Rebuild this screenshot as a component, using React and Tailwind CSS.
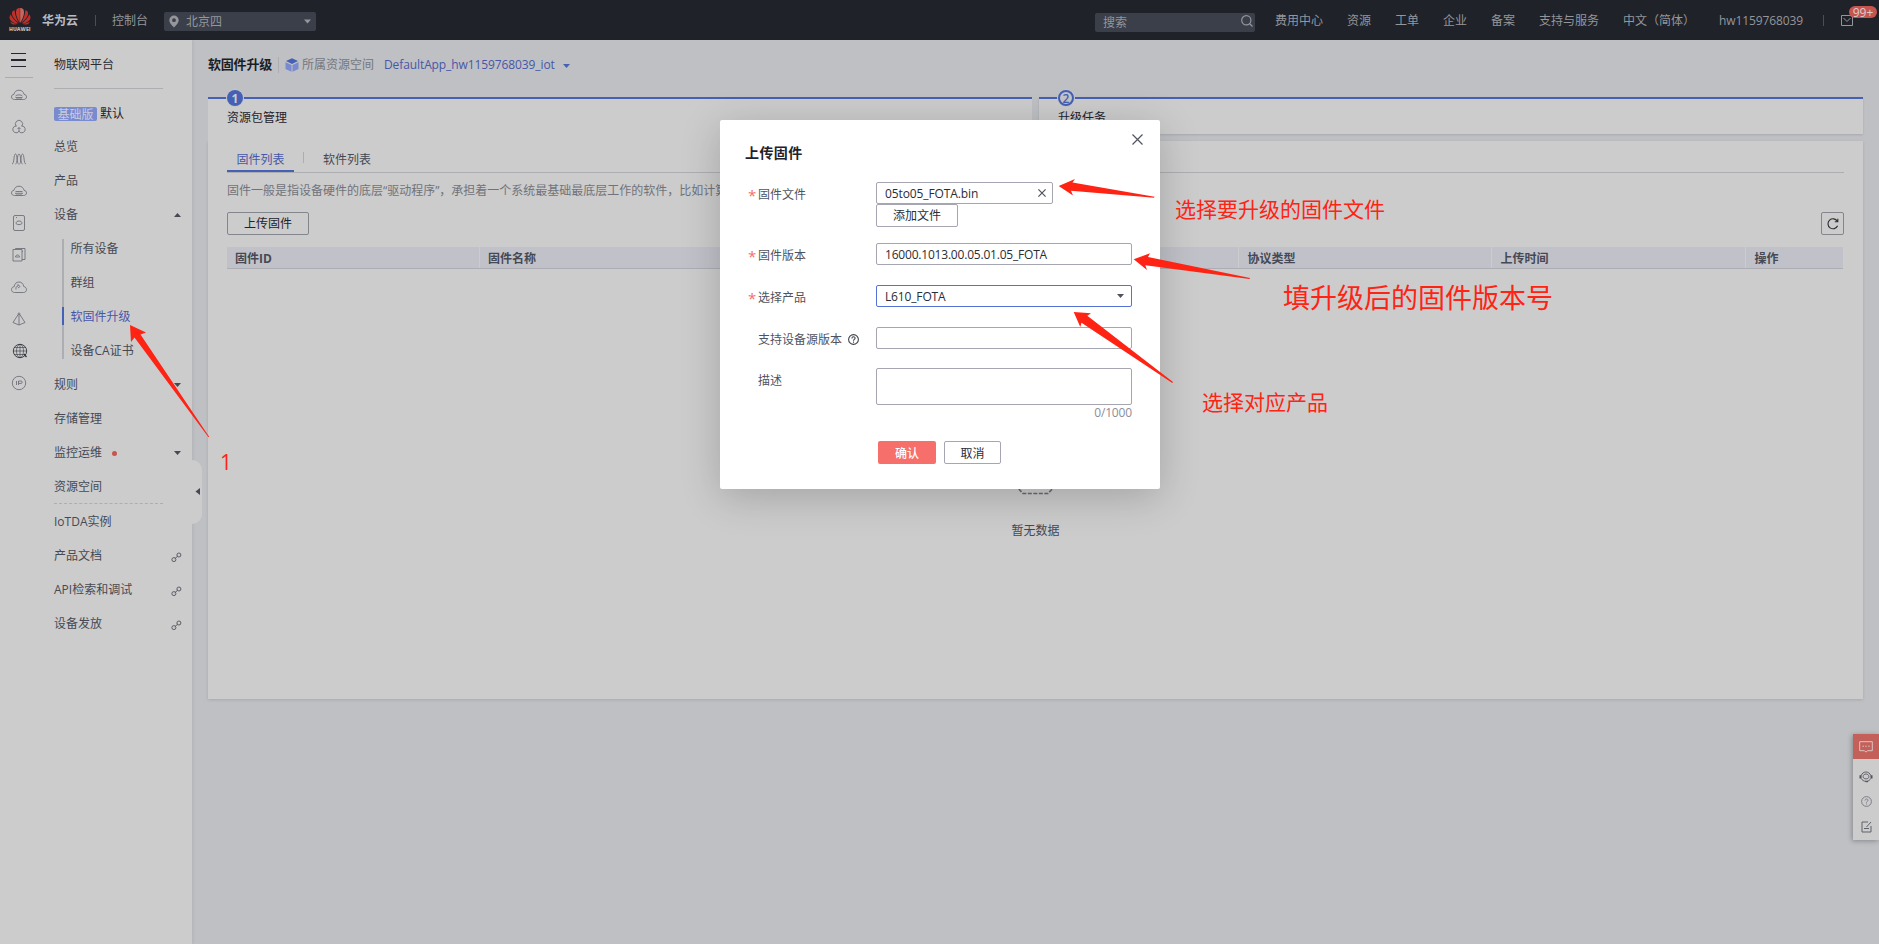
import React from "react";

const navLinks = ["费用中心", "资源", "工单", "企业", "备案", "支持与服务", "中文（简体）"];

const deviceMenu = [
  { label: "所有设备" },
  { label: "群组" },
  { label: "软固件升级", active: true },
  { label: "设备CA证书" },
];

const docLinks = ["产品文档", "API检索和调试", "设备发放"];

const columns = ["固件ID", "固件名称", "", "", "协议类型", "上传时间"];

function Caret({ dir = "down", className = "" }) {
  const paths = {
    down: "M0 0h7L3.5 4z",
    up: "M0 4h7L3.5 0z",
  };
  return (
    <svg width="7" height="4" viewBox="0 0 7 4" fill="currentColor" className={className}>
      <path d={paths[dir]} />
    </svg>
  );
}

function Logo() {
  return (
    <svg width="22" height="23" viewBox="0 0 22 23" className="shrink-0">
      <g fill="#bd2f29">
        <path d="M10.800 15C8 10 5.900 5 7.600 1.500 8.500.5 9.800.1 10.800.1z" fill="#c4372f" />
        <path d="M11.200 15C14 10 16.100 5 14.400 1.500 13.500.5 12.200.1 11.200.1z" fill="#c9655c" />
        <path d="M9.900 14.800C5.300 12 2.600 8 2.900 4.600 3.200 3.300 4.400 2.500 5.600 2.200 5.900 7 7.700 11 9.900 14.800z" />
        <path d="M12.100 14.800c4.600-2.800 7.300-6.800 7-10.200-.3-1.300-1.500-2.100-2.700-2.400-.3 4.800-2.100 8.800-4.300 12.600z" />
        <path d="M9.300 15.300C5 15.500 1.200 13 .6 10.200.4 8.700.9 7.300 1.600 6.500 3.500 10.200 6 13 9.300 15.300z" />
        <path d="M12.700 15.300c4.300.2 8.100-2.300 8.700-5.100.2-1.500-.3-2.900-1-3.700-1.900 3.700-4.400 6.500-7.700 8.800z" />
        <path d="M9 15.800c-2.800 1.300-5.600 1.100-7.100-.9-.3-.4-.5-.8-.5-1.300C3.800 15 6.300 15.800 9 15.800z" />
        <path d="M13 15.800c2.800 1.300 5.600 1.100 7.100-.9.3-.4.5-.8.5-1.300-2.400 1.400-4.900 2.200-7.600 2.200z" />
      </g>
      <text x="0" y="22.500" fontSize="5.500" fontWeight="800" textLength="21.500" lengthAdjust="spacingAndGlyphs" fill="#b4b5b8">
        HUAWEI
      </text>
    </svg>
  );
}

function TopBar() {
  return (
    <header className="flex h-10 items-center bg-[#1f2229] text-[12px] text-[#94969b]">
      <div className="ml-[9px] flex h-10 items-center pb-px">
        <Logo />
      </div>
      <span className="mt-px ml-[11px] font-bold text-[#b9bbc0]">华为云</span>
      <i className="ml-[17px] h-[11px] w-px bg-[#4b4e55]" />
      <span className="mt-0.5 ml-4">控制台</span>
      <div className="mt-[3px] ml-4 flex h-[19px] w-[152px] items-center rounded-[2px] bg-[#3a3f4a] pr-[5px] pl-[5px]">
        <svg width="10" height="13" viewBox="0 0 10 13" fill="#94969b">
          <path fillRule="evenodd" d="M5 .5a4.700 4.700 0 0 1 4.700 4.700C9.700 8.200 5 12.500 5 12.500S.3 8.200.3 5.200A4.700 4.700 0 0 1 5 .5zM5 3.300a1.900 1.900 0 1 0 0 3.800 1.900 1.900 0 0 0 0-3.800z" />
        </svg>
        <span className="mt-px ml-[7px] flex-1">北京四</span>
        <Caret className="h-[5px]" />
      </div>
      <div className="mt-[5px] ml-auto flex h-[19px] w-[160px] items-center rounded-[2px] bg-[#3a3f4a] pr-[2px] pl-2">
        <span className="mt-px flex-1">搜索</span>
        <svg width="12" height="12" viewBox="0 0 12 12" fill="none" stroke="#94969b" strokeWidth="1.200" className="mb-[3px]">
          <circle cx="5.300" cy="5.300" r="4.600" />
          <path d="M8.500 8.500l3 3" />
        </svg>
      </div>
      <nav className="mt-0.5 ml-5 flex items-center gap-6">
        {navLinks.map((link) => (
          <span key={link} className="whitespace-nowrap">{link}</span>
        ))}
        <span className="w-[84px] whitespace-nowrap tracking-[-0.1px]">hw1159768039</span>
      </nav>
      <i className="ml-5 h-[11px] w-px bg-[#4b4e55]" />
      <div className="relative mr-[26px] ml-[17px]">
        <svg width="12" height="11" viewBox="0 0 12 11" fill="none" stroke="#94969b">
          <path d="M.5.5h11v10H.5zM2.500 3l3.500 3.500L9.500 3" />
        </svg>
        <span className="absolute top-[-9px] left-2 h-3 w-7 rounded-full bg-[#c65550] text-center text-[12px] leading-[13px] text-[#d8cccc]">
          99+
        </span>
      </div>
    </header>
  );
}

function RailIcon({ children, dark }) {
  return (
    <div className="flex h-8 items-center justify-center">
      <svg width="16" height="16" viewBox="0 0 16 16" fill="none" stroke={dark ? "#33363f" : "#6f727a"} strokeWidth="0.900">
        {children}
      </svg>
    </div>
  );
}

function Rail() {
  return (
    <div className="flex w-[37px] flex-col">
      <div className="ml-[11px] flex h-[27px] w-[15px] flex-col justify-end gap-[5px] text-[#23262f]">
        <i className="h-[1.500px] bg-current" />
        <i className="h-[1.500px] bg-current" />
        <i className="h-[1.500px] bg-current" />
      </div>
      <div className="mt-[10px] mb-px ml-[5px] h-px w-7 bg-[#aaabae]" />
      <RailIcon>
        <path d="M3.500 12.500C1.800 12.500.5 11.500.5 9.900c0-1.400 1-2.400 2.500-2.600C3.500 4.700 5.300 3.200 8 3.200s4.500 1.500 5 4.100c1.500.2 2.500 1.200 2.500 2.600 0 1.600-1.300 2.600-3 2.600zM4.500 10.500h7M5 12h6M4.500 9c1-1.500 6-1.500 7 0" />
      </RailIcon>
      <RailIcon>
        <path d="M5.200 7.200a3.600 3.600 0 1 1 5.600 0M10.500 7a3.400 3.400 0 1 1-2.500 5.300A3.400 3.400 0 1 1 5.500 7M8 12.500V8.500M6.500 10L8 8.500 9.500 10" />
      </RailIcon>
      <RailIcon>
        <path d="M1 13c2.500 0 1.500-10 3.500-10s1.300 10 3 10M4.500 13C6.500 13 6 3 8 3s1.500 10 3.500 10M8.500 13c1.700 0 1-10 3-10s1 10 3.500 10" />
      </RailIcon>
      <RailIcon>
        <path d="M3.500 12.500C1.800 12.500.5 11.500.5 9.900c0-1.400 1-2.400 2.500-2.600C3.500 4.700 5.300 3.200 8 3.200s4.500 1.500 5 4.100c1.500.2 2.500 1.200 2.500 2.600 0 1.600-1.300 2.600-3 2.600zM4.500 8.500h7M4 10.300h8M5 12h6" />
      </RailIcon>
      <RailIcon>
        <rect x="2.500" y=".5" width="11" height="15" rx="1.500" />
        <path d="M5 8.500c0-2 1.500-2.500 3-2.500s3 .5 3 2.500c-1 1.500-5 1.500-6 0zM5 2.500h1" />
      </RailIcon>
      <RailIcon>
        <path d="M2 2.500h9v11.500H2zM4.500 2.500V1.500h9.500v11h-3M4.500 10c0-1.500 1-2 2-2s2 .5 2 2zM11 4.500h1" />
      </RailIcon>
      <RailIcon>
        <path d="M3.500 13.500C1.800 13.500.5 12.300.5 10.600c0-1.600 1.100-2.800 2.700-3C3.600 4.700 5.400 3 8 3s4.300 1.700 4.800 4.600c1.600.2 2.700 1.400 2.700 3 0 1.700-1.300 2.900-3 2.900zM5 10.500c-.5-2 .5-3.500 2-3.500V5.500L9 7.500 7 9" />
      </RailIcon>
      <RailIcon>
        <path d="M7.500 3L2 11.500l6 2.500 6-2.500L8.500 3M8 3v11" />
        <circle cx="8" cy="2.700" r=".8" />
      </RailIcon>
      <div className="pl-[3px]">
        <RailIcon dark>
          <circle cx="8" cy="8" r="6.700" />
          <ellipse cx="8" cy="8" rx="3.500" ry="6.700" strokeWidth=".6" />
          <path d="M8 1.300v13.400M1.300 8h13.400M2.300 4.500h11.400M2.300 11.500h11.400" strokeWidth=".6" />
          <path d="M12 11l2.500 3" strokeWidth="1.200" />
        </RailIcon>
      </div>
      <RailIcon>
        <circle cx="8" cy="8" r="6.700" />
        <path d="M5.500 6v4M7.500 10V6h2.500a1.200 1.200 0 0 1 0 2.400H7.500" />
      </RailIcon>
    </div>
  );
}

function MenuRow({ children }) {
  return <div className="flex h-[34px] items-center">{children}</div>;
}

function ChainIcon() {
  return (
    <svg width="11" height="11" viewBox="0 0 11 11" fill="none" stroke="#5b5e67" strokeWidth="1" className="mt-[3px] mr-[10px] ml-auto">
      <circle cx="2.900" cy="7.600" r="2" />
      <circle cx="7.900" cy="3" r="2" />
      <path d="M3.800 6.800l3.200-3" />
    </svg>
  );
}

function Sidebar() {
  return (
    <aside className="relative z-10 flex w-48 shrink-0 bg-[#cccccc] text-[12px] text-[#464954] shadow-[1px_0_3px_rgba(0,0,0,0.08)]">
      <Rail />
      <div className="flex flex-1 flex-col pl-[17px]">
        <div className="flex h-[49px] w-[109px] items-center border-b border-[#adaeb1] pt-px text-[#2a2d36]">物联网平台</div>
        <div className="mt-[17px] mb-[9px] flex h-[15px] items-center text-[#1f222b]">
          <span className="mr-[3px] h-[14px] w-[43px] rounded-[2px] bg-[#7a8ace] text-center leading-[15px] text-[#c9cce0]">基础版</span>
          默认
        </div>
        <MenuRow>总览</MenuRow>
        <MenuRow>产品</MenuRow>
        <MenuRow>
          设备
          <Caret dir="up" className="mr-[11px] mb-px ml-auto" />
        </MenuRow>
        <div className="flex">
          <div className="mt-[7px] mb-[9px] ml-2 flex w-0.5 flex-col bg-[#adaeb3]">
            <i className="mt-[68px] h-[18px] bg-[#4560b4]" />
          </div>
          <div className="pl-[6.500px]">
            {deviceMenu.map((item) => (
              <div key={item.label} className={item.active ? "flex h-[34px] items-center text-[#4757a8]" : "flex h-[34px] items-center"}>
                {item.label}
              </div>
            ))}
          </div>
        </div>
        <MenuRow>
          规则
          <Caret className="mr-[11px] ml-auto" />
        </MenuRow>
        <MenuRow>存储管理</MenuRow>
        <MenuRow>
          监控运维
          <i className="mt-px ml-[10px] size-[5px] rounded-full bg-[#c65550]" />
          <Caret className="mr-[11px] mb-px ml-auto" />
        </MenuRow>
        <div className="mb-px flex h-[34px] w-[109px] items-center border-b border-dashed border-[#adaeb1]">资源空间</div>
        <MenuRow>IoTDA实例</MenuRow>
        {docLinks.map((link) => (
          <MenuRow key={link}>
            {link}
            <ChainIcon />
          </MenuRow>
        ))}
      </div>
      {/* collapse handle */}
      <div className="absolute top-[420px] left-48 flex h-16 w-[10px] items-center justify-end rounded-r-[10px] bg-[#cccccc] pr-0.5 pb-0.5">
        <svg width="5" height="7" viewBox="0 0 5 7" fill="#464954">
          <path d="M5 0v7L.5 3.500z" />
        </svg>
      </div>
    </aside>
  );
}

function Step({ num, title, active }) {
  return (
    <div className={active ? "relative h-11 flex-1 border-t-2 border-[#4560b4] bg-[#cccccc]" : "relative h-[37px] flex-1 border-t-2 border-[#4560b4] bg-[#cccccc] shadow-[0_1px_2px_rgba(0,0,0,0.12)]"}>
      <span
        className={
          active
            ? "absolute top-[-9px] left-[19px] size-4 rounded-full bg-[#4560b4] text-center text-[12px] leading-[17px] font-bold text-[#cccccc] ring-1 ring-[#c4c5c9]"
            : "absolute top-[-9px] left-[19px] size-4 rounded-full border-2 border-[#4560b4] bg-[#c4c5c9] text-center text-[12px] leading-[14px] font-semibold text-[#4560b4] ring-1 ring-[#c4c5c9]"
        }
      >
        {num}
      </span>
      <div className="mt-2.5 ml-[19px] text-[12px] leading-[18px] text-[#1f222b]">{title}</div>
    </div>
  );
}

function Content() {
  return (
    <main className="flex flex-1 flex-col bg-[#bfc0c4] pr-4 pl-4 text-[12px]">
      <div className="flex h-[57px] items-center pb-[8px]">
        <h1 className="w-16 text-[13px] font-bold tracking-[-0.2px] whitespace-nowrap text-[#1b1e26]">软固件升级</h1>
        <i className="ml-[6px] h-4 w-px bg-[#adaeb3]" />
        <svg width="14" height="14" viewBox="0 0 14 14" className="mt-px ml-1.5">
          <path d="M7 .3l6 2.700-6 2.900-6-2.900z" fill="#4560b4" />
          <path d="M.5 4.200l6 2.900v6.600l-6-2.800zM13.500 4.200l-6 2.900v6.600l6-2.800z" fill="#7a8ace" />
        </svg>
        <span className="mt-px ml-[3px] text-[#74777f]">所属资源空间</span>
        <span className="mt-px ml-2.5 w-[171px] tracking-[-0.100px] whitespace-nowrap text-[#4757a8]">DefaultApp_hw1159768039_iot</span>
        <Caret className="mt-[3px] ml-[7.500px] text-[#4560b4]" />
      </div>

      <div className="flex gap-[7px]">
        <Step num="1" title="资源包管理" active />
        <Step num="2" title="升级任务" />
      </div>

      <section className="flex h-[558px] flex-col bg-[#cccccc] pr-[19px] pl-[19px] shadow-[0_1px_3px_rgba(0,0,0,0.12)]">
        <div className="flex h-8 items-end border-b border-[#adaeb1]">
          <div className="flex h-[23px] w-[67px] justify-center border-b-2 border-[#4560b4] leading-[22px] text-[#4757a8]">固件列表</div>
          <i className="mb-[9px] ml-[9px] h-[11px] w-px bg-[#adaeb3]" />
          <span className="mb-0.5 ml-[19px] leading-5 text-[#464954]">软件列表</span>
        </div>
        <p className="mt-[9px] h-[18px] overflow-hidden leading-[18px] whitespace-nowrap text-[#70737b]">
          固件一般是指设备硬件的底层“驱动程序”，承担着一个系统最基础最底层工作的软件，比如计算机
        </p>
        <div className="mt-3 flex justify-between">
          <button className="h-[23px] w-[82px] rounded-[2px] border border-[#84868e] pt-px text-[#1f222b]">上传固件</button>
          <button className="flex size-[23px] items-center justify-center rounded-[2px] border border-[#84868e]">
            <svg width="12" height="12" viewBox="0 0 12 12" fill="none" stroke="#2a2d36" strokeWidth="1.100">
              <path d="M10.600 7.800A5 5 0 1 1 10.300 3.200M10.800 .8v3H7.800" />
            </svg>
          </button>
        </div>
        <div className="mt-3 mr-px flex h-[22px] shrink-0 border-b border-[#adaeb3] bg-[#c1c2c9] font-bold text-[#464954]">
          {columns.map((name, i) => (
            <div key={i} className="w-[253.100px] border-r border-[#cccccc] pl-2 leading-[23px]">{name}</div>
          ))}
          <div className="pl-[9px] leading-[23px]">操作</div>
        </div>
        <div className="flex flex-1 flex-col items-center pt-[190px] text-[#464954]">
          <svg width="60" height="36" viewBox="0 0 60 36" fill="none" stroke="#686b73" strokeWidth="1.600" strokeDasharray="4 1.500" className="mr-0.5">
            <path d="M10 26l8 8.500h25l8-8.500V2H10z" />
          </svg>
          <span className="mt-[26px] leading-[20px]">暂无数据</span>
        </div>
      </section>
    </main>
  );
}

function FloatTools() {
  return (
    <div className="absolute top-[734px] right-0 flex h-[106px] w-[26px] flex-col items-center bg-[#cccccc] shadow-[-1px_1px_5px_rgba(0,0,0,0.3)]">
      <div className="flex h-[25px] w-full items-center justify-center bg-[#c4605a]">
        <svg width="14" height="12" viewBox="0 0 14 12" fill="none" stroke="#dcc4c3">
          <path d="M.7.700h12.600v9H8.500L7 11.200 5.500 9.700H.7zM3.500 5.200H5M6.300 5.200h1.500M9.200 5.200h1.500" />
        </svg>
      </div>
      <svg width="14" height="12" viewBox="0 0 14 12" fill="none" stroke="#50535c" className="mt-[12px]">
        <path d="M2.300 4.500C3 2.300 4.800 1 7 1s4 1.300 4.700 3.500M2.300 7.500C3.200 9.300 4.800 10.300 7 10.300M11.700 7.500C10.800 9.300 9.500 10 8 10.500" strokeWidth=".9" />
        <path d="M4 6c0-4 6-4 6 0M4 6c.5 2.500 5.500 2.500 6 0" strokeWidth=".8" />
        <path d="M1.500 4.200v3.300M12.500 4.200v3.300" strokeWidth="2" />
        <path d="M6.500 10.500h2.500" strokeWidth="1.400" />
      </svg>
      <svg width="11" height="11" viewBox="0 0 11 11" fill="none" stroke="#74777f" strokeWidth=".9" className="mt-[13px]">
        <circle cx="5.500" cy="5.500" r="4.900" />
        <path d="M4 4.500c0-2 3-2 3-.2 0 1.200-1.500 1-1.500 2.400M5.500 7.500v1" />
      </svg>
      <svg width="11" height="12" viewBox="0 0 11 12" fill="none" stroke="#5f626b" className="mt-[14px]">
        <path d="M7 1H1v10h9V5M5.500 6L10 1M3 7.500h5" />
      </svg>
    </div>
  );
}

function Field({ label, required, help, labelClass, children }) {
  return (
    <div className="flex">
      <div className={labelClass}>
        <span className="w-[10px] shrink-0 text-[15px] leading-[22px] text-[#f66f6a]">{required ? "*" : ""}</span>
        {label}
        {help && (
          <svg width="11" height="11" viewBox="0 0 11 11" fill="none" stroke="#40434d" strokeWidth="1.100" className="ml-1.5">
            <circle cx="5.500" cy="5.500" r="4.900" />
            <path d="M3.900 4.400c0-2.200 3.200-2.200 3.200-.2 0 1.300-1.600 1.100-1.600 2.500M5.500 7.600v1.100" />
          </svg>
        )}
      </div>
      {children}
    </div>
  );
}

function UploadDialog() {
  const label = "flex h-[22px] w-[128px] items-center pt-[3px] text-[#50535e]";
  return (
    <div className="absolute top-[120px] left-[720px] flex h-[369px] w-[440px] flex-col rounded-[2px] bg-white pl-7 text-[12px] text-[#2a2d36] shadow-[0_8px_40px_rgba(0,0,0,0.2)]">
      <svg width="11" height="11" viewBox="0 0 11 11" stroke="#50535e" strokeWidth="1.200" className="absolute top-[14px] right-[17px]">
        <path d="M.5.500l10 10M10.500.500l-10 10" />
      </svg>
      <h2 className="mt-[22px] ml-[-3px] h-[40px] text-[14px] leading-[22px] font-bold tracking-[0.4px] text-[#1f222b]">上传固件</h2>

      <Field label="固件文件" required labelClass={label}>
        <div>
          <div className="flex h-[22px] w-[177px] items-center rounded-[2px] border border-[#a5a6b2] pr-[6px] pl-2">
            <span className="mt-px flex-1 tracking-[-0.100px]">05to05_FOTA.bin</span>
            <svg width="8" height="8" viewBox="0 0 8 8" stroke="#50535e" strokeWidth="1.200">
              <path d="M.4.400l7.200 7.200M7.600.400L.4 7.600" />
            </svg>
          </div>
          <button className="block h-[23px] w-[82px] rounded-[2px] border border-[#a5a6b2] leading-[22px]">添加文件</button>
        </div>
      </Field>

      <div className="mt-4">
        <Field label="固件版本" required labelClass={label}>
          <div className="flex h-[22px] w-64 items-center rounded-[2px] border border-[#a5a6b2] pt-px pl-2 tracking-[-0.2px]">16000.1013.00.05.01.05_FOTA</div>
        </Field>
      </div>

      <div className="mt-5">
        <Field label="选择产品" required labelClass={label}>
          <div className="flex h-[22px] w-64 items-center justify-between rounded-[2px] border border-[#5572d6] pr-[7px] pl-2 tracking-[-0.15px]">
            <span className="mt-px">L610_FOTA</span>
            <Caret className="text-[#50535e]" />
          </div>
        </Field>
      </div>

      <div className="mt-5">
        <Field label="支持设备源版本" help labelClass={label}>
          <div className="h-[22px] w-64 rounded-[2px] border border-[#a5a6b2]" />
        </Field>
      </div>

      <div className="mt-[19px]">
        <Field label="描述" labelClass={label}>
          <div className="h-[37px] w-64 rounded-[2px] border border-[#a5a6b2]" />
        </Field>
      </div>
      <div className="mr-7 text-right leading-[16px] tracking-[-0.15px] text-[#8a8e99]">0/1000</div>

      <div className="mt-5 ml-[130px] flex gap-2">
        <button className="h-[23px] w-[58px] rounded-[2px] bg-[#f66f6a] pt-0.5 font-medium text-white">确认</button>
        <button className="h-[23px] w-[57px] rounded-[2px] border border-[#a5a6b2] pt-0.5">取消</button>
      </div>
    </div>
  );
}

// red arrows and hints drawn on top of the console
function Annotations() {
  return (
    <div className="pointer-events-none absolute inset-0 z-30 text-[21px] leading-[30px] whitespace-nowrap text-[#ff2314]">
      <svg width="1879" height="944" viewBox="0 0 1879 944" fill="#ff2314" className="absolute inset-0">
        <polygon points="130,325 146,332.500 140.500,334.500 209.300,437 208.300,437 134.500,337.500 131,342" />
        <polygon points="1058.700,186 1075,179 1072.500,182.500 1154.500,196.700 1154,197.800 1071,190.700 1073,195.500" />
        <polygon points="1133.700,259.300 1150,253.300 1148,257 1250,278 1249.500,279 1145.300,265.300 1147,270" />
        <polygon points="1073.700,312 1091,313.300 1087.300,315.700 1173,382 1172.300,383 1081.500,322.700 1080.300,327" />
      </svg>
      <span className="absolute top-[447px] left-[220px]">1</span>
      <span className="absolute top-[194px] left-[1175px]">选择要升级的固件文件</span>
      <span className="absolute top-[283px] left-[1283px] text-[27px]">填升级后的固件版本号</span>
      <span className="absolute top-[387px] left-[1202px]">选择对应产品</span>
    </div>
  );
}

export default function App() {
  return (
    <div className="relative flex h-[944px] w-[1879px] flex-col overflow-hidden font-['Open_Sans','Noto_Sans_CJK_SC',sans-serif]">
      <TopBar />
      <div className="flex flex-1">
        <Sidebar />
        <Content />
      </div>
      <FloatTools />
      <UploadDialog />
      <Annotations />
    </div>
  );
}
